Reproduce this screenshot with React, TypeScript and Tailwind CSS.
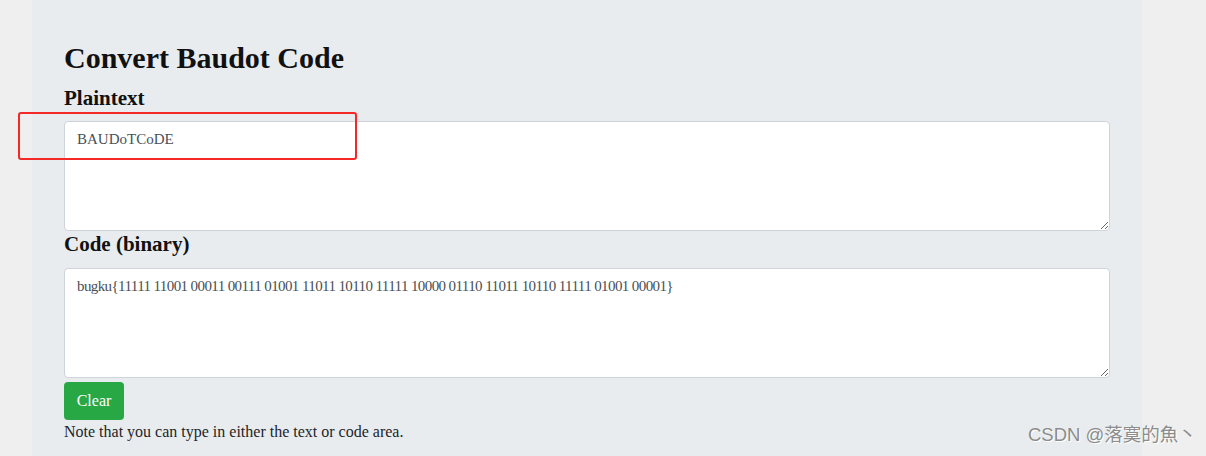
import React from "react";

export default function App() {
  const serif = { fontFamily: '"Liberation Serif", "Times New Roman", serif' } as const;
  return (
    <div className="relative w-full h-[456px] overflow-hidden bg-[#efefef] pl-[32px]" style={serif}>
      <div className="w-[1110px] h-full bg-[#e9ecef] px-8 pt-[40px]">
        <h1 className="text-[30px] leading-[36px] font-bold text-[#111]">Convert Baudot Code</h1>
        <h4 className="mt-[10px] text-[21px] leading-[25px] font-bold text-[#111]">Plaintext</h4>
        <textarea
          className="mt-[10px] block w-[1046px] h-[110px] bg-white border border-[#ced4da] rounded-[4px] px-3 py-[6px] text-[15px] leading-[22.5px] text-[#495057] outline-none"
          style={serif}
          defaultValue="BAUDoTCoDE"
        />
        <h4 className="mt-[1px] text-[21px] leading-[25px] font-bold text-[#111]">Code (binary)</h4>
        <textarea
          className="mt-[11px] block w-[1046px] h-[110px] bg-white border border-[#ced4da] rounded-[4px] px-3 py-[6px] text-[15px] leading-[22.5px] text-[#495057] tracking-[-0.6px] outline-none"
          style={serif}
          defaultValue="bugku{11111 11001 00011 00111 01001 11011 10110 11111 10000 01110 11011 10110 11111 01001 00001}"
        />
        <button className="mt-[4px] block w-[60px] h-[38px] rounded-[4px] bg-[#28a745] text-white text-[16px]" style={serif}>
          Clear
        </button>
        <p className="text-[16px] leading-[24px] text-[#212529]">Note that you can type in either the text or code area.</p>
      </div>

      <div className="absolute left-[18px] top-[112px] w-[339px] h-[48px] border-2 border-[#f52828] rounded-[3px]" />

      <div
        className="absolute left-[1028px] top-[423px] text-[18.5px] leading-[24px] text-[#8c8c8c] [text-shadow:1px_1px_0_#ffffff]"
        style={{ fontFamily: '"Liberation Sans", "Noto Sans CJK SC", sans-serif' }}
      >
        CSDN @落寞的魚丶
      </div>
    </div>
  );
}
